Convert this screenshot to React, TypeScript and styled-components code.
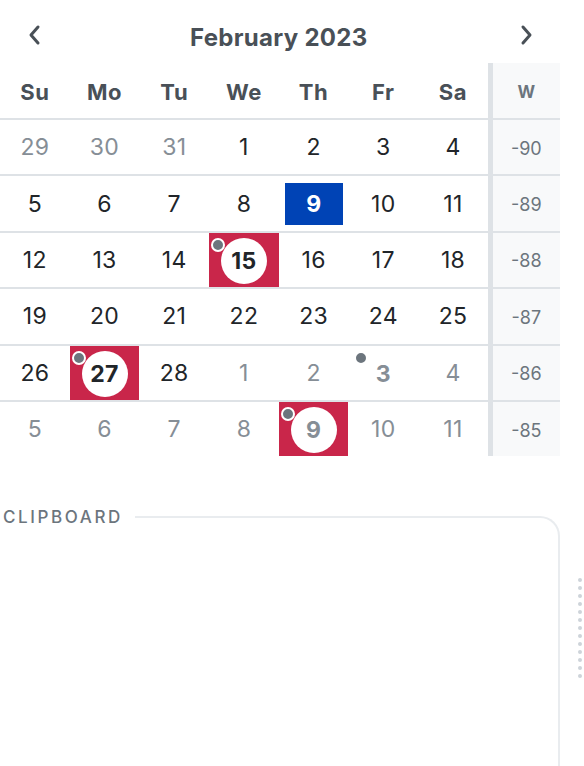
import styled, { createGlobalStyle } from "styled-components"

const GlobalStyle = createGlobalStyle`
  html, body {
    margin: 0;
    padding: 0;
    background: #fff;
  }
  body {
    font-family: Inter, Roboto, "Liberation Sans", sans-serif;
    color: #212529;
  }
`

const COLS = "repeat(7, 69.7px) 5px 67px"

const Page = styled.div`
  display: flex;
  width: 584px;
  height: 766px;
  overflow: hidden;
`

const Main = styled.div`
  width: 560px;
  flex-shrink: 0;
`

const Nav = styled.div`
  display: grid;
  grid-template-columns: ${COLS};
  height: 63px;
  align-items: center;
`

const NavButton = styled.button`
  display: flex;
  align-items: center;
  justify-content: center;
  border: none;
  background: none;
  padding: 6px 0 0;
  height: 100%;
  color: #495057;
  cursor: pointer;
`

const Title = styled.div`
  grid-column: 2 / 8;
  text-align: center;
  font-size: 24px;
  font-weight: 700;
  letter-spacing: 0.3px;
  color: #495057;
  padding-top: 11px;
`

const Row = styled.div<{ $head?: boolean; $last?: boolean }>`
  display: grid;
  grid-template-columns: ${COLS};
  height: ${p => (p.$head ? "55px" : "54.4px")};
  border-bottom: ${p => (p.$last ? "none" : "2px solid #dee2e6")};
`

const HeadCell = styled.div`
  display: flex;
  align-items: center;
  justify-content: center;
  font-size: 22px;
  font-weight: 700;
  letter-spacing: 0.6px;
  color: #495057;
  padding-top: 2px;
`

const Sep = styled.div`
  background: #dee2e6;
`

const WeekCell = styled.div<{ $head?: boolean }>`
  display: flex;
  align-items: center;
  justify-content: center;
  background: #f8f9fa;
  color: #6c757d;
  font-size: ${p => (p.$head ? "17px" : "18px")};
  font-weight: ${p => (p.$head ? 700 : 400)};
  padding-top: 2px;
`

const DayCell = styled.div<{ $marked?: boolean }>`
  display: flex;
  align-items: center;
  justify-content: center;
  background: ${p => (p.$marked ? "#c9264a" : "transparent")};
`

const DayNum = styled.span<{ $other?: boolean; $bold?: boolean }>`
  font-size: 23px;
  letter-spacing: 0.3px;
  font-weight: ${p => (p.$bold ? 700 : 400)};
  color: ${p => (p.$other ? "#868e96" : "#212529")};
`

const Selected = styled.div`
  width: 58px;
  height: 42px;
  background: #0043b5;
  color: #fff;
  font-size: 23px;
  font-weight: 700;
  display: flex;
  align-items: center;
  justify-content: center;
`

const Bubble = styled.div<{ $filled?: boolean }>`
  position: relative;
  width: 46px;
  height: 46px;
  border-radius: 50%;
  background: ${p => (p.$filled ? "#fff" : "transparent")};
  display: flex;
  align-items: center;
  justify-content: center;
  margin-top: 2px;
`

const Dot = styled.span<{ $plain?: boolean }>`
  position: absolute;
  left: ${p => (p.$plain ? "-6px" : "-10px")};
  top: 0px;
  width: 10px;
  height: 10px;
  border-radius: 50%;
  background: #6c757d;
  border: 2px solid #fff;
`

const Clipboard = styled.fieldset`
  margin: 51px 0 0 0;
  padding: 0;
  min-width: 0;
  height: 300px;
  border: 2px solid #e9ecef;
  border-left: none;
  border-bottom: none;
  border-top-right-radius: 20px;
`

const Legend = styled.legend`
  padding: 0 12px 0 3px;
  font-size: 17px;
  font-weight: 500;
  letter-spacing: 2.6px;
  color: #6c757d;
`

const Gutter = styled.div`
  flex: 1;
  display: flex;
  flex-direction: column;
  gap: 4px;
  padding: 578px 0 0 18px;
`

const Grip = styled.span`
  width: 4px;
  height: 4px;
  border-radius: 50%;
  background: #ced4da;
`

type Day = {
  n: number
  other?: boolean
  selected?: boolean
  marked?: boolean
  dot?: boolean
}

const weeks: { w: number; days: Day[] }[] = [
  { w: -90, days: [{ n: 29, other: true }, { n: 30, other: true }, { n: 31, other: true }, { n: 1 }, { n: 2 }, { n: 3 }, { n: 4 }] },
  { w: -89, days: [{ n: 5 }, { n: 6 }, { n: 7 }, { n: 8 }, { n: 9, selected: true }, { n: 10 }, { n: 11 }] },
  { w: -88, days: [{ n: 12 }, { n: 13 }, { n: 14 }, { n: 15, marked: true, dot: true }, { n: 16 }, { n: 17 }, { n: 18 }] },
  { w: -87, days: [{ n: 19 }, { n: 20 }, { n: 21 }, { n: 22 }, { n: 23 }, { n: 24 }, { n: 25 }] },
  { w: -86, days: [{ n: 26 }, { n: 27, marked: true, dot: true }, { n: 28 }, { n: 1, other: true }, { n: 2, other: true }, { n: 3, other: true, dot: true }, { n: 4, other: true }] },
  { w: -85, days: [{ n: 5, other: true }, { n: 6, other: true }, { n: 7, other: true }, { n: 8, other: true }, { n: 9, other: true, marked: true, dot: true }, { n: 10, other: true }, { n: 11, other: true }] },
]

const weekdays = ["Su", "Mo", "Tu", "We", "Th", "Fr", "Sa"]

function Chevron({ dir }: { dir: "left" | "right" }) {
  return (
    <svg width="14" height="22" viewBox="0 0 14 22" fill="none">
      <polyline
        points={dir === "left" ? "10,3 3,11 10,19" : "4,3 11,11 4,19"}
        stroke="currentColor"
        strokeWidth="3"
        strokeLinecap="round"
        strokeLinejoin="round"
      />
    </svg>
  )
}

function DayView({ d }: { d: Day }) {
  if (d.selected) {
    return (
      <DayCell>
        <Selected>{d.n}</Selected>
      </DayCell>
    )
  }
  if (d.dot) {
    return (
      <DayCell $marked={d.marked}>
        <Bubble $filled={d.marked}>
          <Dot $plain={!d.marked} />
          <DayNum $other={d.other} $bold>{d.n}</DayNum>
        </Bubble>
      </DayCell>
    )
  }
  return (
    <DayCell>
      <DayNum $other={d.other}>{d.n}</DayNum>
    </DayCell>
  )
}

export default function App() {
  return (
    <Page>
      <GlobalStyle />
      <Main>
        <Nav>
          <NavButton aria-label="Previous month"><Chevron dir="left" /></NavButton>
          <Title>February 2023</Title>
          <span />
          <NavButton aria-label="Next month"><Chevron dir="right" /></NavButton>
        </Nav>
        <Row $head>
          {weekdays.map(w => <HeadCell key={w}>{w}</HeadCell>)}
          <Sep />
          <WeekCell $head>W</WeekCell>
        </Row>
        {weeks.map((wk, i) => (
          <Row key={wk.w} $last={i === weeks.length - 1}>
            {wk.days.map((d, j) => <DayView key={j} d={d} />)}
            <Sep />
            <WeekCell>{wk.w}</WeekCell>
          </Row>
        ))}
        <Clipboard>
          <Legend>CLIPBOARD</Legend>
        </Clipboard>
      </Main>
      <Gutter>
        {Array.from({ length: 13 }, (_, i) => <Grip key={i} />)}
      </Gutter>
    </Page>
  )
}
